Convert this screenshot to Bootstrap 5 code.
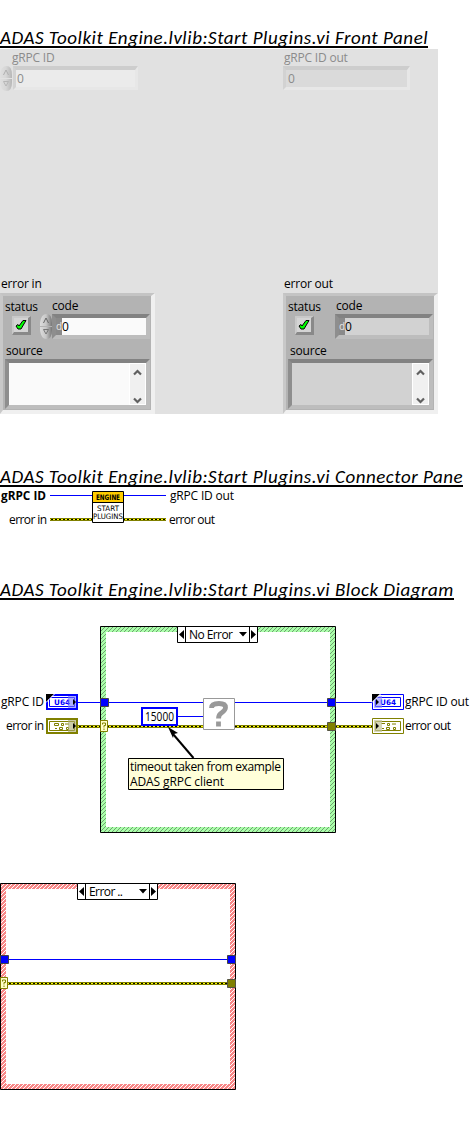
<!DOCTYPE html>
<html lang="en">
<head>
<meta charset="utf-8">
<meta name="viewport" content="width=device-width, initial-scale=1">
<title>Start Plugins.vi</title>
<link rel="stylesheet" href="https://cdn.jsdelivr.net/npm/bootstrap@5.3.0/dist/css/bootstrap.min.css">
<style>
body{font-family:"Open Sans","Noto Sans",sans-serif;font-size:12px;line-height:16px;letter-spacing:-.2px;color:#000;background:#fff;overflow:hidden}
.doc{width:471px;height:1140px}
.title{font:italic 19px/28px Carlito,Lato,sans-serif;height:24px;border-bottom:2px solid #000;overflow:hidden;white-space:nowrap;width:max-content;letter-spacing:.52px}
.t1{margin-top:24px}.t2{margin-top:49px}.t3{margin-top:39px}
.panel{width:438px;height:365px;margin-top:1px;background:#e1e1e1}
.side{width:155px}
.dim{color:#8b8b8b}
.numlabel{padding:1px 0 0 12px;height:17px}
.num{height:24px;width:125px;border:solid;border-width:4px 3px 3px;border-color:#cdcdcd #e7e7e7 #e7e7e7 #d2d2d2;background:#ebebeb;line-height:17px;padding-left:1px}
.num.out{background:#dadada;width:127px;padding-left:2px}
.cluster{height:121px;border:solid;border-width:3px 4px 4px 3px;border-color:#c4c4c4 #f0f0f0 #f0f0f0 #c8c8c8;background:#b3b3b3}
.led{width:19px;height:19px;border:solid;border-width:2px 3px 3px 2px;border-color:#c9c9c9 #898989 #898989 #c9c9c9;background:#d4d4d4;margin:2px 0 0 9px}
.codebox{width:98px;height:25px;border:4px solid;border-color:#828282 #bdbdbd #bdbdbd #8e8e8e;background:#fafafa;line-height:17px}
.radix{width:6px;height:17px;background:#8a8a8a;color:#e4e4e4;font-size:10px}
.txt{width:145px;height:50px;border:4px solid;border-color:#828282 #bdbdbd #bdbdbd #8e8e8e;background:#fafafa;margin-left:2px}
.out .codebox,.out .txt{background:#d2d2d2}
.scroll{width:17px;background:#f0f0f0;border:1px solid #fff}
svg{display:block;flex:none}
svg text{font-family:"Open Sans","Noto Sans",sans-serif;font-size:12px;letter-spacing:0}
svg .pix{font-family:"DejaVu Sans",sans-serif;font-size:7.5px}
svg .pixb{font-weight:bold}
</style>
<script src="https://cdn.jsdelivr.net/npm/bootstrap@5.3.0/dist/js/bootstrap.bundle.min.js"></script>
</head>
<body>
<svg width="0" height="0" class="position-absolute">
<defs>
<linearGradient id="metal"><stop stop-color="#ddd"/><stop offset=".5" stop-color="#c7c7c7"/><stop offset="1" stop-color="#777"/></linearGradient>
<g id="spin"><path d="M0 12V9Q1 0 6.500 0T12 9V12Z" fill="url(#metal)"/><path d="M0 13V16Q1 25 6.500 25T12 16V13Z" fill="url(#metal)"/><path d="M3.500 9 6 4 8.500 9" fill="none" stroke="#666"/><path d="M3.500 15.500H8.500L6 20Z" fill="none" stroke="#777"/></g>
<g id="check"><path d="M2 8 4 6.500 5 8 9 2.500H12L7 11H4Z" fill="#0f0" stroke="#000"/></g>
<g id="chev"><path d="M4 10.500 7.500 7 11 10.500" fill="none" stroke="#606060" stroke-width="2.200"/><path d="M4 34.500 7.500 38 11 34.500" fill="none" stroke="#606060" stroke-width="2.200"/></g>
<pattern id="green" width="4" height="4" patternUnits="userSpaceOnUse"><path fill="#afa" d="M0 0h4v4H0z"/><path d="M0 3h1v1H0zM1 2h1v1H1zM2 1h1v1H2zM3 0h1v1H3z" fill="#70a070"/></pattern>
<pattern id="red" width="4" height="4" patternUnits="userSpaceOnUse"><path fill="#f88888" d="M0 0h4v4H0z"/><path d="M0 3h1v1H0zM1 2h1v1H1zM2 1h1v1H2zM3 0h1v1H3z" fill="#fff"/></pattern>
</defs>
</svg>
<main class="doc d-flex flex-column align-items-start">
<h1 class="title t1 mb-0">ADAS Toolkit Engine.lvlib:Start Plugins.vi Front Panel</h1>
<section class="panel d-flex justify-content-between">
  <div class="side d-flex flex-column justify-content-between">
    <div class="dim"><div class="numlabel">gRPC ID</div>
      <div class="d-flex"><svg width="13" height="26" opacity=".4"><use href="#spin"/></svg><div class="num">0</div></div></div>
    <div><div style="padding:0 0 1px 1px">error in</div>
      <div class="cluster">
        <div class="d-flex" style="padding:2px 0 0 2px"><span style="width:47px;padding-top:1px">status</span><span>code</span></div>
        <div class="d-flex" style="height:25px;margin-top:-1px"><div class="led"><svg width="14" height="14"><use href="#check"/></svg></div><svg width="12" height="25" style="margin-left:9px"><use href="#spin"/></svg><div class="codebox d-flex"><span class="radix">d</span><span>0</span></div></div>
        <div style="padding:4px 0 0 3px">source</div>
        <div class="txt d-flex justify-content-end"><div class="scroll"><svg width="15" height="41"><use href="#chev"/></svg></div></div>
      </div></div>
  </div>
  <div class="side out d-flex flex-column justify-content-between">
    <div class="dim"><div class="numlabel" style="padding-left:1px">gRPC ID out</div><div class="num out">0</div></div>
    <div><div style="padding:0 0 1px 1px">error out</div>
      <div class="cluster">
        <div class="d-flex" style="padding:2px 0 0 2px"><span style="width:48px;padding-top:1px">status</span><span>code</span></div>
        <div class="d-flex" style="height:25px;margin-top:-1px"><div class="led"><svg width="14" height="14"><use href="#check"/></svg></div><div class="codebox d-flex" style="margin-left:21px"><span class="radix">d</span><span>0</span></div></div>
        <div style="padding:4px 0 0 4px">source</div>
        <div class="txt d-flex justify-content-end"><div class="scroll"><svg width="15" height="41"><use href="#chev"/></svg></div></div>
      </div></div>
  </div>
</section>
<h2 class="title t2 mb-0">ADAS Toolkit Engine.lvlib:Start Plugins.vi Connector Pane</h2>
<!-- connector pane -->
<svg width="471" height="50" viewBox="0 487 471 50">
  <path d="M50 495.500H166" stroke="#00f"/><path d="M50 519.500H166" stroke="#808000" stroke-width="3"/><path d="M50 519.500H166" stroke="#ff0"/><path d="M51 519.500H166" stroke="#000" stroke-dasharray="2 2"/>
  <path d="M92.500 491.500h31v31h-31z" fill="#fff" stroke="#000"/><path d="M93 492h30v10H93z" fill="#fc0"/><path d="M92 502.500h32" stroke="#000"/>
  <text class="pix pixb" x="96" y="499.500" textLength="24" lengthAdjust="spacingAndGlyphs">ENGINE</text><text class="pix" x="97" y="511" textLength="22" lengthAdjust="spacingAndGlyphs">START</text><text class="pix" x="93" y="519" textLength="30" lengthAdjust="spacingAndGlyphs">PLUGINS</text>
  <text x="1" y="500" font-weight="700" textLength="45" lengthAdjust="spacingAndGlyphs">gRPC ID</text><text x="9" y="524" textLength="38">error in</text><text x="170" y="500" textLength="64">gRPC ID out</text><text x="169" y="524" textLength="46">error out</text>
</svg>
<h2 class="title t3 mb-0">ADAS Toolkit Engine.lvlib:Start Plugins.vi Block Diagram</h2>
<!-- block diagram: case structure with both frames -->
<svg width="471" height="540" viewBox="0 600 471 540">
  <path d="M100.500 626.500h235v206h-235z" fill="url(#green)" stroke="#000"/><path d="M106 632h224v195H106z" fill="#fff"/>
  <path d="M78 702.500H372M178 716.500H203" stroke="#00f"/>
  <path d="M78 726.500H372" stroke="#808000" stroke-width="3"/><path d="M78 726.500H372" stroke="#ff0"/><path d="M79 726.500H372" stroke="#000" stroke-dasharray="2 2"/>
  <g id="sel"><path d="M177.500 626.500h80v16h-80zM185.500 626.500v16M249.500 626.500v16" fill="#fff" stroke="#000"/><path d="M184 630v9l-5-4.500zM251 630v9l5-4.500zM239 632h8l-4 4.500z"/></g>
  <text x="189" y="639" textLength="44">No Error</text>
  <path d="M100.500 698.500h8v8h-8zM327.500 698.500h8v8h-8z" fill="#00f" stroke="#444"/><path d="M327.500 722.500h8v8h-8z" fill="#808000" stroke="#554"/>
  <g id="caseq"><path d="M100.500 720.500h7v11h-7z" fill="#ffffc8" stroke="#808000"/><path d="M102.500 724.500v-1.500h3v2.500h-1.500v2M104 728.500v1.500" fill="none" stroke="#808000"/></g>
  <path d="M142 708h35v17h-35z" fill="#fff" stroke="#00f" stroke-width="2"/><text x="145" y="721" textLength="29" lengthAdjust="spacingAndGlyphs">15000</text>
  <path d="M203.500 698.500h31v31h-31z" fill="#fff" stroke="#999"/><path d="M211.500 708Q211.500 703.500 219 703.500Q225.500 703.500 225.500 707.500Q225.500 710 222 712.500Q218.500 714.500 218.500 718.500M218.500 721.500v5" fill="none" stroke="#999" stroke-width="4.800"/>
  <path d="M193.500 758 173 734" stroke="#000" stroke-width="2"/><path d="M168 727 178 733 174 734 173 738Z"/>
  <path d="M128.500 758.500h155v31h-155z" fill="#ffffd9" stroke="#000"/><text x="130" y="771" textLength="151">timeout taken from example</text><text x="130" y="786" textLength="94">ADAS gRPC client</text>
  <text x="1" y="706" textLength="43">gRPC ID</text><text x="6" y="730" textLength="38">error in</text><text x="405" y="706" textLength="64">gRPC ID out</text><text x="405" y="730" textLength="46">error out</text>
  <!-- controls -->
  <path d="M47 695h30v14H47z" fill="#fff" stroke="#00f" stroke-width="2"/><path d="M49.500 697.500h25v9h-25z" fill="#fff" stroke="#00f"/><text class="pix pixb" x="54" y="705" fill="#00f" textLength="16" lengthAdjust="spacingAndGlyphs">U64</text><path d="M68 696h8v12h-8z" fill="#77f" opacity=".6"/><path d="M73 699v6l3-3zM46 694h8l-8 8z"/><path d="M46 702.500 54.500 694" stroke="#fff"/>
  <path d="M47 719h30v14H47z" fill="#fff" stroke="#808000" stroke-width="2"/><path d="M49.500 721.500h25v9h-25z" fill="#fff" stroke="#808000"/><path d="M54.500 723.500h4v2h-4zM61.500 723.500h2v2h-2zM65 724h4M55 728.500h2M59.500 727.500h3v2h-3zM66.500 727.500h2v2h-2z" fill="none" stroke="#808000"/><path d="M68 720h8v12h-8z" fill="#aaa96d" opacity=".6"/><path d="M73 723v6l3-3z"/>
  <!-- indicators -->
  <path d="M372.500 694.500h31v15h-31zM375.500 697.500h25v9h-25z" fill="#fff" stroke="#00f"/><text class="pix pixb" x="380" y="705" fill="#00f" textLength="16" lengthAdjust="spacingAndGlyphs">U64</text><path d="M374 696h8v12h-8z" fill="#88f" opacity=".6"/><path d="M376 699v6l3-3zM372 694h8l-8 8z"/><path d="M372 702.500 380.500 694" stroke="#fff"/>
  <path d="M372.500 718.500h31v15h-31zM375.500 721.500h25v9h-25z" fill="#fff" stroke="#808000"/><path d="M381 723.500h4M387.500 723.500h2v2h-2zM392 724h4M382 728.500h2M386.500 727.500h3v2h-3zM393.500 727.500h2v2h-2z" fill="none" stroke="#808000"/><path d="M374 720h8v12h-8z" fill="#c5c59a" opacity=".7"/><path d="M376 723v6l3-3z"/>
  <!-- error frame -->
  <path d="M.5 883.500h235v206H.5z" fill="url(#red)" stroke="#000"/><path d="M6 889h224v195H6z" fill="#fff"/>
  <use href="#sel" x="-100" y="257"/><text x="89" y="896" textLength="34">Error ..</text>
  <path d="M8 959.500H228" stroke="#00f"/><path d="M8 983.500H228" stroke="#808000" stroke-width="3"/><path d="M8 983.500H228" stroke="#ff0"/><path d="M9 983.500H228" stroke="#000" stroke-dasharray="2 2"/>
  <path d="M.5 955.500h8v8h-8zM227.500 955.500h8v8h-8z" fill="#00f" stroke="#444"/><path d="M227.500 979.500h8v8h-8z" fill="#808000" stroke="#554"/><use href="#caseq" x="-100" y="257"/>
</svg>
</main>
</body>
</html>
